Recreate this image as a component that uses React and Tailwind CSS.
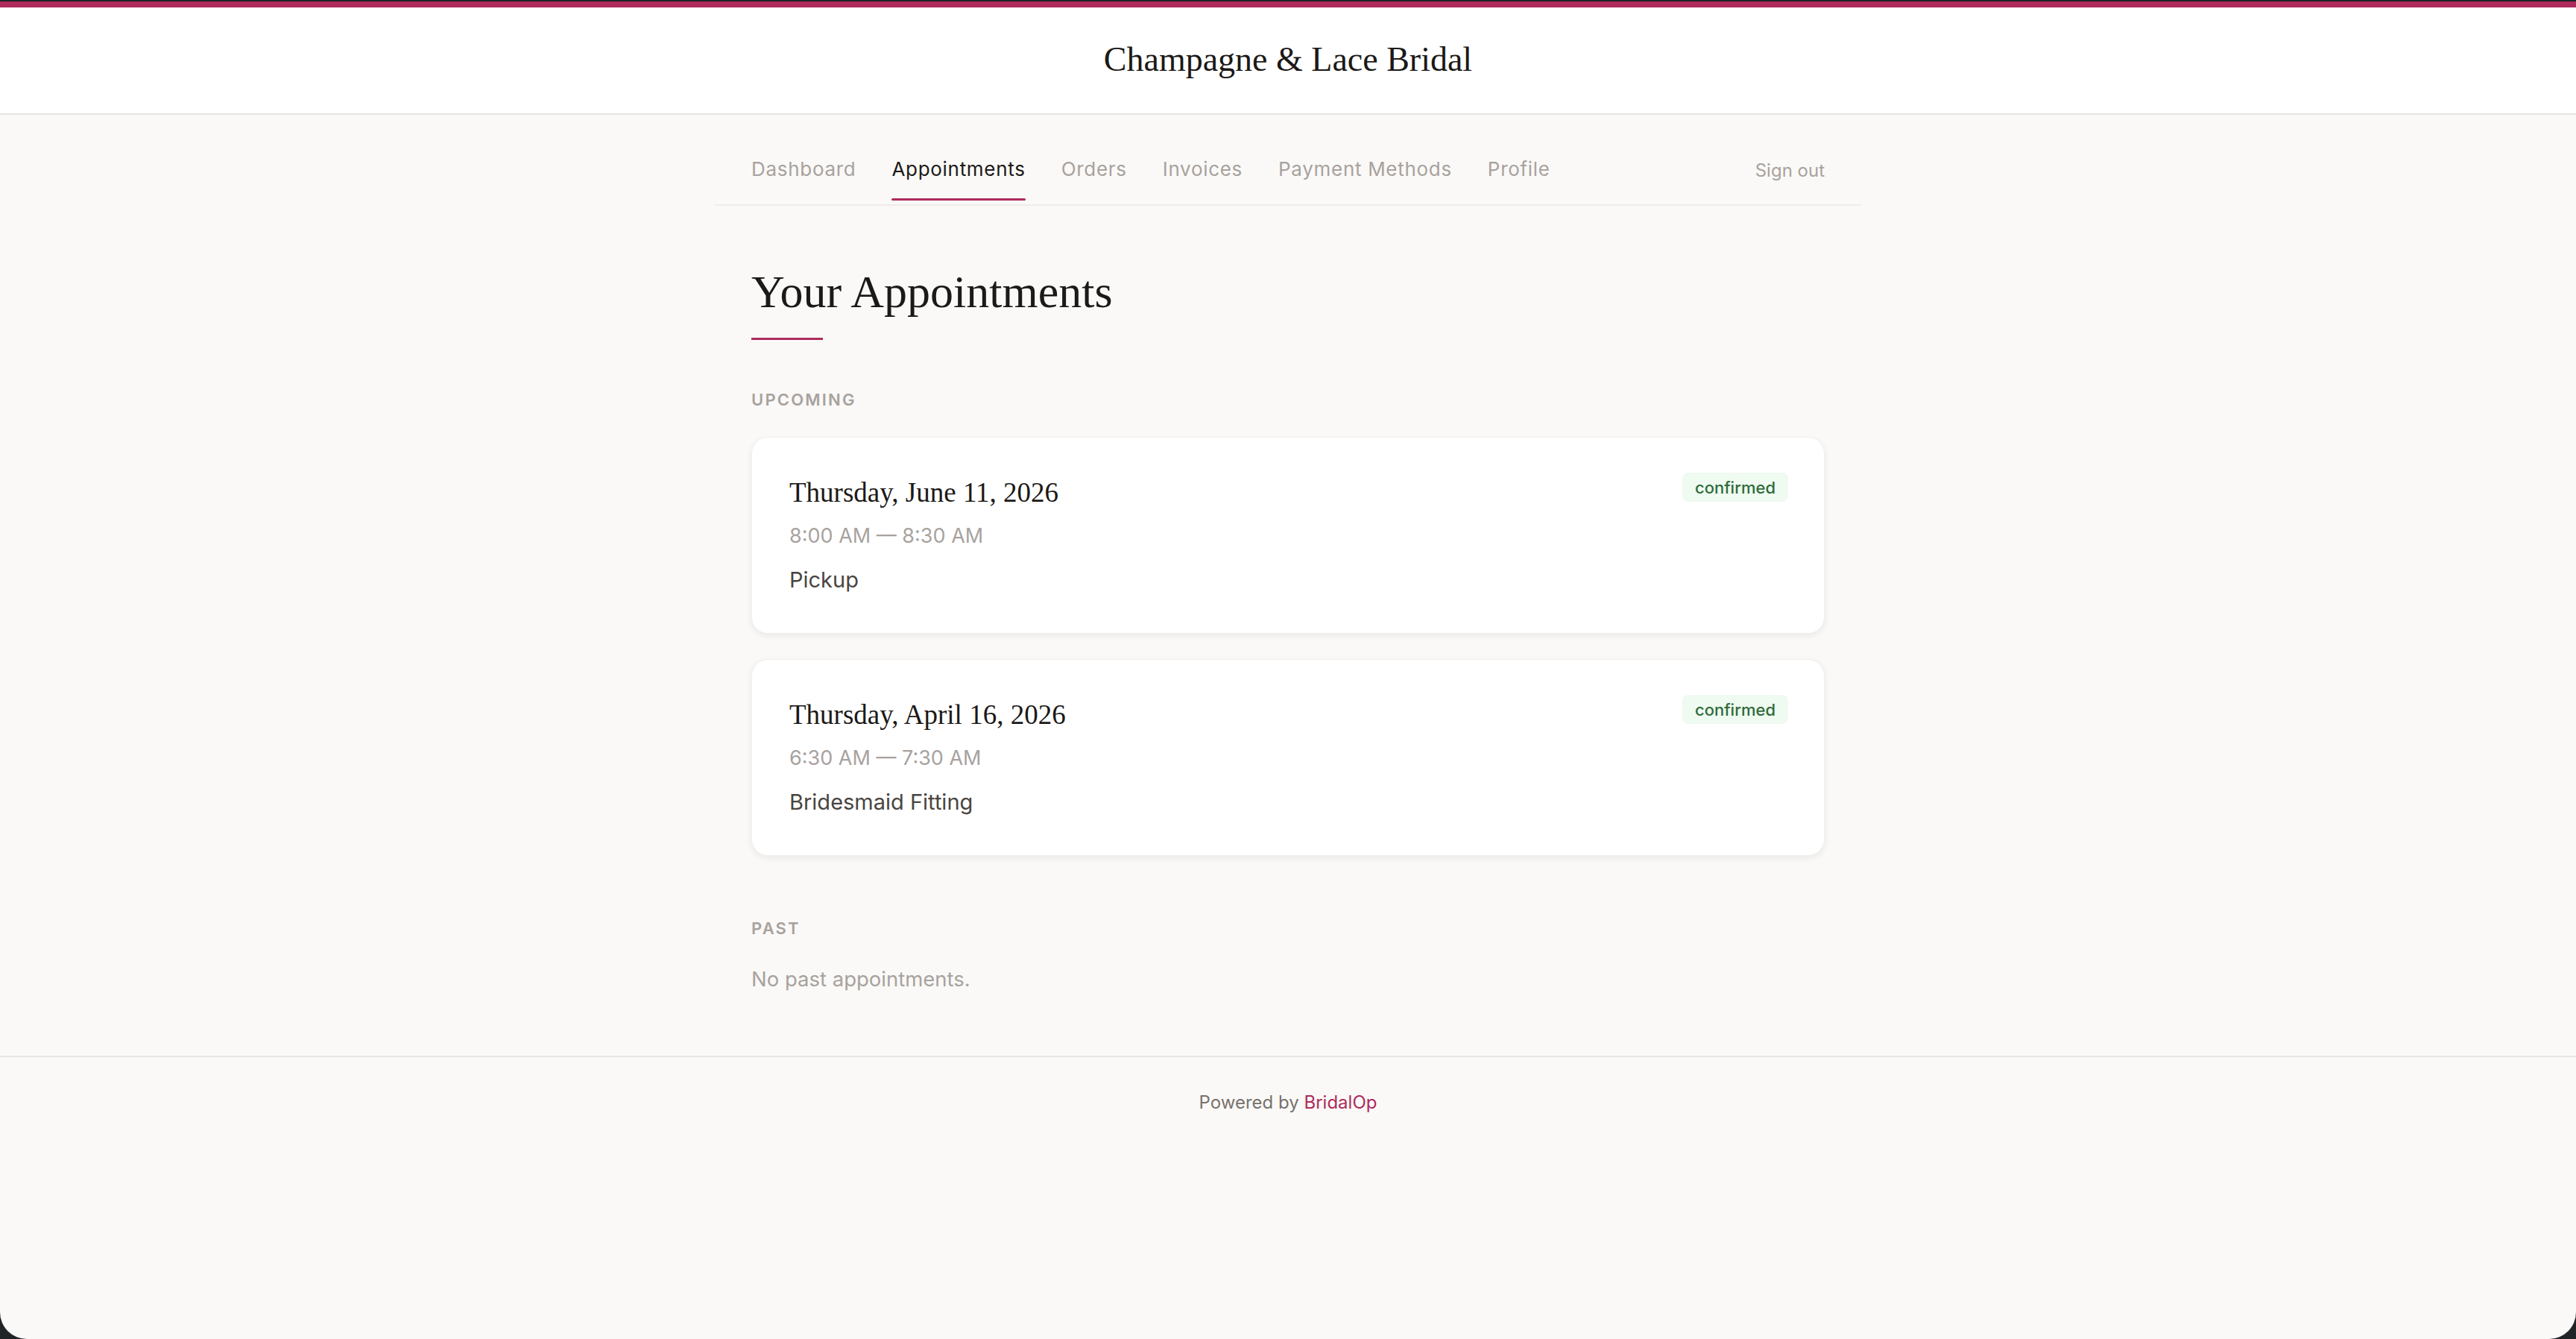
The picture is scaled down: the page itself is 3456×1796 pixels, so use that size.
const NAV = ['Dashboard', 'Appointments', 'Orders', 'Invoices', 'Payment Methods', 'Profile'];

const UPCOMING = [
  { date: 'Thursday, June 11, 2026', time: '8:00 AM — 8:30 AM', type: 'Pickup', status: 'confirmed' },
  { date: 'Thursday, April 16, 2026', time: '6:30 AM — 7:30 AM', type: 'Bridesmaid Fitting', status: 'confirmed' },
];

const serif = "font-['Liberation_Serif',_'Times_New_Roman',_serif]";

function SectionLabel({ children }) {
  return (
    <h3 className="text-[22px] leading-none font-semibold tracking-[0.1em] uppercase text-[#a8a29e]">{children}</h3>
  );
}

function AppointmentCard({ appt }) {
  return (
    <div className="bg-white rounded-[22px] border border-[#f1efec] shadow-[0_3px_8px_rgba(28,25,23,0.07)] pl-[50px] pr-[48px] pt-[47px] pb-[51px] flex items-start justify-between">
      <div className="flex flex-col">
        <div className={`${serif} text-[37px] leading-[54px] text-[#1c1917]`}>{appt.date}</div>
        <div className="mt-[11px] text-[27px] leading-[40px] text-[#a8a29e]">{appt.time}</div>
        <div className="mt-[19px] text-[29px] leading-[40px] text-[#4a4541]">{appt.type}</div>
      </div>
      <span className="h-[39px] px-[17px] flex items-center rounded-[8px] bg-[#effaf1] text-[22px] leading-none font-medium text-[#2f6b3b]">
        {appt.status}
      </span>
    </div>
  );
}

export default function App() {
  return (
    <div className="h-[1796px] bg-[#202427] pt-[2px] font-['Inter',_'Liberation_Sans',_sans-serif]">
      <div className="h-full rounded-b-[36px] overflow-hidden bg-[#faf9f7] flex flex-col">
        <header className="bg-white border-t-[8px] border-[#ae2b5c] border-b-2 border-b-[#e8e6e3] pt-[47px] pb-[49px] text-center">
          <h1 className={`${serif} text-[46px] leading-none text-[#1c1917]`}>Champagne &amp; Lace Bridal</h1>
        </header>

        <div className="w-[1538px] mx-auto">
          <nav className="flex items-start justify-between px-[49px] pt-[60px] pb-[5px] border-b-2 border-[#efedea]">
            <div className="flex gap-[48px]">
              {NAV.map((item) => {
                const active = item === 'Appointments';
                return (
                  <div key={item} className="flex flex-col">
                    <span className={`text-[26px] leading-none tracking-[0.027em] ${active ? 'text-[#1c1917]' : 'text-[#a8a29e]'}`}>{item}</span>
                    <span className={`mt-[26px] h-[3px] rounded-full ${active ? 'bg-[#ae2b5c]' : 'bg-transparent'}`} />
                  </div>
                );
              })}
            </div>
            <button className="mt-[3px] text-[24px] leading-none text-[#a8a29e]">Sign out</button>
          </nav>

          <main className="px-[49px] pt-[84px]">
            <h2 className={`${serif} text-[62px] leading-none text-[#1c1917]`}>Your Appointments</h2>
            <div className="mt-[31px] w-[96px] h-[3px] bg-[#ae2b5c]" />

            <div className="mt-[69px]">
              <SectionLabel>Upcoming</SectionLabel>
            </div>
            <div className="mt-[39px] flex flex-col gap-[34px]">
              {UPCOMING.map((appt) => (
                <AppointmentCard key={appt.date} appt={appt} />
              ))}
            </div>

            <div className="mt-[86px]">
              <SectionLabel>Past</SectionLabel>
            </div>
            <p className="mt-[44px] text-[27.5px] leading-none text-[#a8a29e]">No past appointments.</p>
          </main>
        </div>

        <footer className="mt-[88px] border-t-2 border-[#e8e6e3] pt-[49px] text-center text-[24px] leading-none text-[#78716c]">
          Powered by <a className="text-[#ae2b5c]">BridalOp</a>
        </footer>
      </div>
    </div>
  );
}
